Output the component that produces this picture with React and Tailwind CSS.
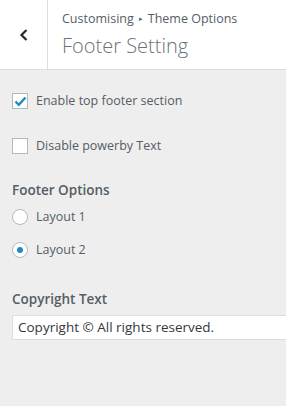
export default function App() {
  return (
    <div className="h-[406px] w-[286px] overflow-hidden bg-[#eeeeee] text-[#555d66]" style={{ fontFamily: '"Open Sans", "Noto Sans", sans-serif' }}>
      <div className="flex h-[70px] border-b border-[#dddddd] bg-white">
        <button className="flex w-[48px] items-center justify-center border-r border-[#dddddd] text-[#23282d]">
          <svg width="12" height="14" viewBox="0 0 12 14" fill="none">
            <path d="M8.5 2 L3.5 7 L8.5 12" stroke="currentColor" strokeWidth="2.2" />
          </svg>
        </button>
        <div className="flex flex-col pl-[14px] pt-[10px]">
          <span className="flex items-center text-[12.5px] leading-[18px]">
            Customising
            <span className="mx-[5px] text-[7px]">▸</span>
            Theme Options
          </span>
          <h1 className="mt-[5px] text-[20px] font-light leading-[26px] text-[#6c7278]">Footer Setting</h1>
        </div>
      </div>

      <div className="px-[12px]">
        <label className="mt-[23px] flex h-[16px] items-center gap-[8px] text-[12.5px] leading-[16px]">
          <span className="flex h-[16px] w-[16px] shrink-0 items-center justify-center border border-[#b4b9be] bg-white">
            <svg width="13" height="11" viewBox="0 0 13 11" fill="none">
              <path d="M1.5 5.5 L4.8 8.8 L11.5 1.5" stroke="#1e8cbe" strokeWidth="2.4" />
            </svg>
          </span>
          Enable top footer section
        </label>
        <label className="mt-[29px] flex h-[16px] items-center gap-[8px] text-[12.5px] leading-[16px]">
          <span className="h-[16px] w-[16px] shrink-0 border border-[#b4b9be] bg-white" />
          Disable powerby Text
        </label>

        <h3 className="mt-[26px] text-[13.5px] font-semibold leading-[20px]">Footer Options</h3>
        <label className="mt-[9px] flex h-[16px] items-center gap-[8px] text-[12.5px] leading-[16px]">
          <span className="h-[16px] w-[16px] shrink-0 rounded-full border border-[#b4b9be] bg-white" />
          Layout 1
        </label>
        <label className="mt-[17px] flex h-[16px] items-center gap-[8px] text-[12.5px] leading-[16px]">
          <span className="flex h-[16px] w-[16px] shrink-0 items-center justify-center rounded-full border border-[#b4b9be] bg-white">
            <span className="h-[6px] w-[6px] rounded-full bg-[#1e8cbe]" />
          </span>
          Layout 2
        </label>

        <h3 className="mt-[31px] text-[13.5px] font-semibold leading-[20px]">Copyright Text</h3>
        <div className="mt-[6px] flex h-[25px] w-[290px] items-center border border-[#dddddd] bg-white px-[5px] text-[13.5px] text-[#32373c]">
          Copyright © All rights reserved.
        </div>
      </div>
    </div>
  );
}
